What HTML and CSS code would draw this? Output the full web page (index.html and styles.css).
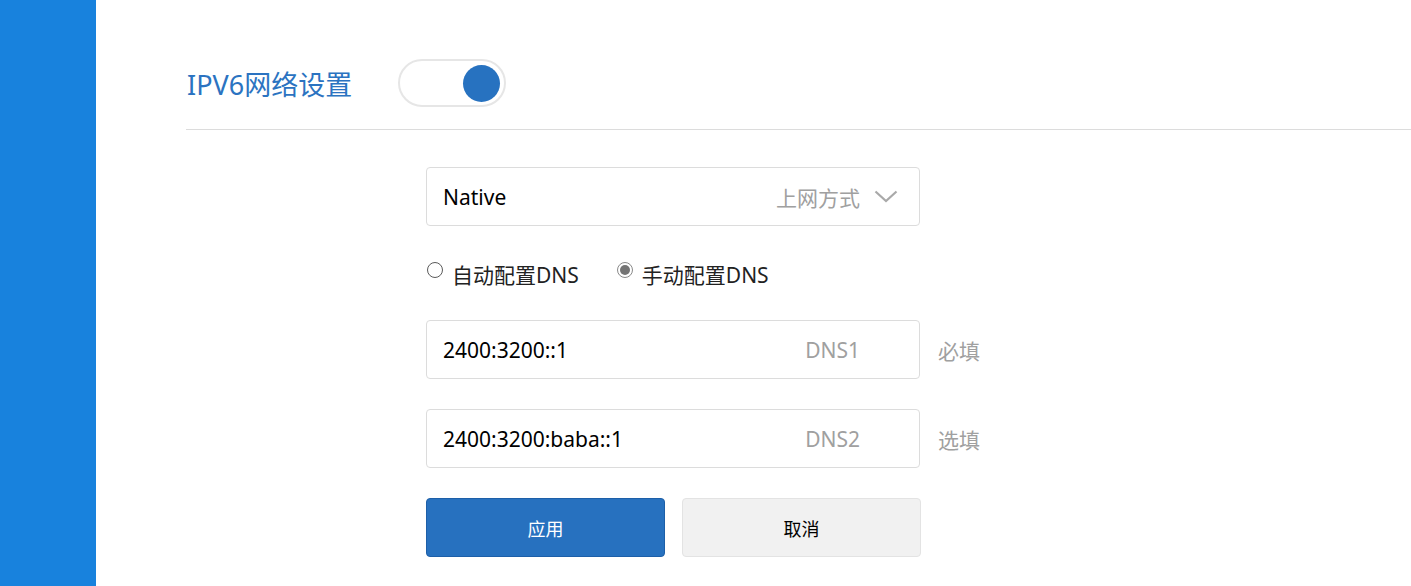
FILE: index.html
```html
<!DOCTYPE html>
<html lang="zh-CN">
<head>
<meta charset="utf-8">
<title>IPV6网络设置</title>
<link rel="stylesheet" href="styles.css">
</head>
<body>
<div class="layout">
  <aside class="sidebar"></aside>
  <main class="main">
    <header class="header">
      <h1 class="title">IPV6网络设置</h1>
      <div class="toggle"><span class="knob"></span></div>
    </header>
    <form class="form">
      <div class="field select">
        <span class="value">Native</span>
        <span class="hint">上网方式</span>
        <svg class="chevron" width="24" height="13" viewBox="0 0 24 13"><path d="M1.5 1.5 L12 11 L22.5 1.5" fill="none" stroke="#a9a9a9" stroke-width="2.2"/></svg>
      </div>
      <div class="radios">
        <label class="radio"><span class="dot"></span><span class="rlabel">自动配置DNS</span></label>
        <label class="radio"><span class="dot checked"></span><span class="rlabel">手动配置DNS</span></label>
      </div>
      <div class="row">
        <div class="field input">
          <span class="value">2400:3200::1</span>
          <span class="hint">DNS1</span>
        </div>
        <span class="note">必填</span>
      </div>
      <div class="row">
        <div class="field input">
          <span class="value">2400:3200:baba::1</span>
          <span class="hint">DNS2</span>
        </div>
        <span class="note">选填</span>
      </div>
      <div class="buttons">
        <button type="button" class="btn primary">应用</button>
        <button type="button" class="btn secondary">取消</button>
      </div>
    </form>
  </main>
</div>
</body>
</html>
```
FILE: styles.css
```css
* { box-sizing: border-box; }
html, body { margin: 0; padding: 0; background: #fff; }
body {
  font-family: "Noto Sans", "Noto Sans CJK SC", sans-serif;
  color: #000;
}
.layout {
  display: flex;
  height: 586px;
  overflow: hidden;
}
.sidebar {
  width: 96px;
  flex: 0 0 96px;
  background: #1882dd;
}
.main {
  flex: 1;
  padding-left: 90px;
}
.header {
  display: flex;
  align-items: center;
  padding-top: 59px;
  padding-bottom: 22px;
  border-bottom: 1px solid #dcdcdc;
}
.title {
  margin: 4px 0 0 1px;
  font-size: 27px;
  font-weight: 400;
  color: #2b73c1;
  line-height: 44px;
  width: 211px;
  white-space: nowrap;
}
.toggle {
  width: 108px;
  height: 48px;
  flex: 0 0 108px;
  border: 2px solid #e6e6e6;
  border-radius: 24px;
  display: flex;
  align-items: center;
  justify-content: flex-end;
  padding-right: 4px;
}
.knob {
  width: 37px;
  height: 37px;
  border-radius: 50%;
  background: #2772c0;
}
.form {
  padding-left: 240px;
  padding-top: 37px;
}
.field {
  width: 494px;
  height: 59px;
  flex: 0 0 494px;
  border: 1px solid #dcdcdc;
  border-radius: 4px;
  display: flex;
  align-items: center;
  padding-left: 16px;
  font-size: 21px;
}
.field .value { flex: 1; }
.field .hint { color: #a0a0a0; font-size: 21px; }
.select { padding-right: 21px; }
.chevron { margin-left: 14px; flex: 0 0 24px; }
.input { padding-right: 59px; }
.radios {
  display: flex;
  align-items: center;
  margin-top: 36px;
  margin-bottom: 34px;
  height: 24px;
  font-size: 21px;
  color: #222;
}
.radio {
  display: flex;
  align-items: center;
  margin-right: 37px;
}
.dot {
  width: 16px;
  height: 16px;
  flex: 0 0 16px;
  border-radius: 50%;
  border: 1px solid #5a5a5a;
  margin-left: 1px;
  margin-right: 9px;
  margin-bottom: 8px;
  display: flex;
  align-items: center;
  justify-content: center;
}
.dot.checked { border-color: #8a8a8a; }
.dot.checked::after {
  content: "";
  width: 10px;
  height: 10px;
  border-radius: 50%;
  background: #757575;
}
.row {
  display: flex;
  align-items: center;
  margin-bottom: 30px;
}
.note {
  margin-left: 18px;
  color: #a0a0a0;
  font-size: 21px;
}
.buttons {
  display: flex;
  gap: 17px;
}
.btn {
  width: 239px;
  height: 59px;
  border-radius: 4px;
  font-family: "Noto Sans", "Noto Sans CJK SC", sans-serif;
  font-size: 18px;
  cursor: pointer;
}
.primary {
  background: #2771bf;
  border: 1px solid #1d5fa8;
  color: #fff;
}
.secondary {
  background: #f1f1f1;
  border: 1px solid #e3e3e3;
  color: #000;
}
```
